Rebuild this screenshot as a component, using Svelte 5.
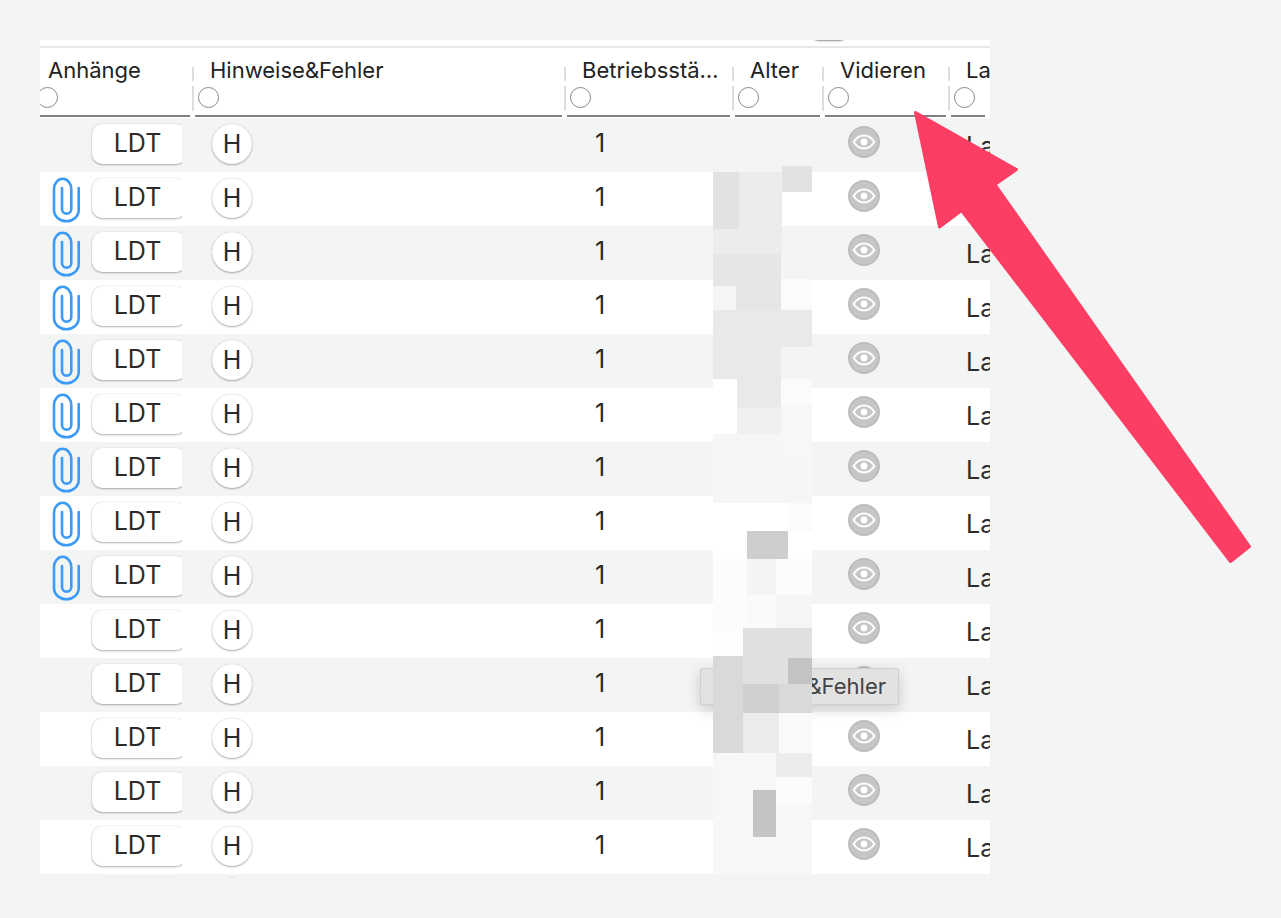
<script>
  const columns = [
    { label: 'Anhänge', width: 155 },
    { label: 'Hinweise&Fehler', width: 372 },
    { label: 'Betriebsstätte', width: 168 },
    { label: 'Alter', width: 90 },
    { label: 'Vidieren', width: 126 },
    { label: 'La', width: 39 }
  ];

  // rows 2-9 have attachments
  const rows = Array.from({ length: 14 }, (_, i) => ({ clip: i > 0 && i < 9 }));

  // pixelated redaction over the Alter column: x1, y1, x2, y2, colour
  const mosaic = [
    [782, 166, 812, 192, '#e2e2e2'], [713, 172, 739, 229, '#e2e2e2'], [739, 172, 782, 229, '#ececec'],
    [713, 229, 782, 254, '#ececec'], [782, 229, 812, 280, '#f3f5f4'], [713, 254, 781, 286, '#e5e7e6'],
    [713, 286, 736, 310, '#f5f5f5'], [736, 286, 781, 310, '#e5e7e6'], [781, 279, 812, 310, '#fbfbfb'],
    [713, 310, 812, 347, '#e8eaea'], [713, 347, 781, 379, '#e8eaea'], [781, 347, 812, 379, '#f3f5f4'],
    [713, 379, 737, 434, '#ffffff'], [737, 379, 781, 408, '#e8eaea'], [781, 379, 812, 404, '#fbfbfb'],
    [737, 408, 781, 434, '#eff0f0'], [781, 404, 812, 460, '#f6f8f7'], [713, 434, 781, 503, '#f5f7f6'],
    [781, 460, 812, 503, '#f5f7f6'], [713, 503, 812, 559, '#ffffff'], [788, 503, 812, 531, '#fbfbfb'],
    [747, 531, 788, 559, '#cecece'], [713, 559, 747, 628, '#fbfcfc'], [747, 559, 776, 595, '#f3f5f4'],
    [776, 559, 812, 595, '#fcfcfc'], [747, 595, 776, 628, '#fafafa'], [776, 595, 812, 628, '#f4f5f5'],
    [713, 628, 743, 656, '#fdfdfd'], [743, 628, 812, 658, '#e0e0e0'], [713, 656, 743, 753, '#d9d9d9'],
    [743, 658, 788, 684, '#e0e0e0'], [788, 658, 812, 684, '#c3c3c3'], [743, 684, 779, 713, '#d0d0d0'],
    [779, 684, 812, 713, '#d9d9d9'], [743, 713, 779, 753, '#ececec'], [779, 713, 812, 753, '#fafafa'],
    [713, 753, 776, 790, '#f6f8f8'], [776, 753, 812, 777, '#ececec'], [776, 777, 812, 805, '#fbfbfb'],
    [713, 790, 753, 837, '#f6f8f8'], [753, 790, 776, 837, '#c3c5c4'], [776, 805, 812, 874, '#f6f8f8'],
    [713, 837, 776, 874, '#f6f8f8']
  ];
</script>

{#snippet eye()}
  <span class="eye">
    <svg width="24" height="16" viewBox="0 0 24 16" aria-hidden="true">
      <path d="M1.6 8C4.4 3.8 8 1.6 12 1.6S19.6 3.8 22.4 8C19.6 12.2 16 14.4 12 14.4S4.4 12.2 1.6 8Z" fill="none" stroke="#fff" stroke-width="2" />
      <circle cx="12" cy="8" r="3.4" fill="#fff" />
    </svg>
  </span>
{/snippet}

<main class="page">
  <div class="table">
    <div class="peek-top"><span class="peek-dot"></span></div>

    <div class="head">
      {#each columns as col, i}
        <div class="th" style="width: {col.width}px">
          <span class="title">{col.label}</span>
          <span class="radio"></span>
          {#if i < columns.length - 1}<span class="grip"></span>{/if}
        </div>
      {/each}
    </div>

    {#each rows as row, i}
      <div class="row" class:odd={i % 2 === 0}>
        <div class="td attach" style="width: {columns[0].width}px">
          {#if row.clip}
            <svg class="clip" width="28" height="46" viewBox="0 0 28 46" aria-hidden="true">
              <path d="M26.7 11V33A12.35 11.3 0 0 1 2 33V12A8.65 10.2 0 0 1 19.3 12V32A4.65 4.65 0 0 1 10 32V11" fill="none" stroke="#3b9bf7" stroke-width="2.6" stroke-linecap="round" />
            </svg>
          {/if}
          <span class="ldt-wrap"><button class="ldt">LDT</button></span>
        </div>
        <div class="td" style="width: {columns[1].width}px">
          <button class="hint">H</button>
        </div>
        <div class="td num" style="width: {columns[2].width}px">1</div>
        <div class="td" style="width: {columns[3].width}px"></div>
        <div class="td validate" style="width: {columns[4].width}px">{@render eye()}</div>
        <div class="td lab" style="width: {columns[5].width}px">La</div>
      </div>
    {/each}

    <div class="peek-bottom">
      <span class="peek-ldt"></span>
      <span class="peek-h"></span>
    </div>
  </div>

  {#each mosaic as [x1, y1, x2, y2, c]}
    <div class="block" style="left: {x1}px; top: {y1}px; width: {x2 - x1}px; height: {y2 - y1}px; background: {c}"></div>
  {/each}

  <div class="tooltip">Hinweise&amp;Fehler</div>

  <svg class="arrow" width="1281" height="918" viewBox="0 0 1281 918" aria-hidden="true">
    <polygon points="915.5,112.5 1016.5,169.5 995,184.5 1249.5,546.5 1230.5,561.5 961.5,210.5 939.5,227" fill="#fd3e64" stroke="#fd3e64" stroke-width="3" stroke-linejoin="round" />
  </svg>
</main>

<style>
  :global(body) {
    margin: 0;
    background: #f3f5f4;
  }

  .page {
    position: relative;
    height: 918px;
    padding: 40px;
    box-sizing: border-box;
    overflow: hidden;
    font-family: Inter, "Liberation Sans", sans-serif;
    color: #2b2b2b;
  }

  .table {
    width: 950px;
  }

  .peek-top {
    height: 6px;
    background: #fff;
    overflow: hidden;
    padding-left: 773px;
    border-bottom: 2px solid #e8e8e8;
  }

  .peek-dot {
    display: block;
    width: 32px;
    height: 10px;
    margin-top: -10px;
    border-radius: 10px;
    box-shadow: 0 1px 2px rgba(0, 0, 0, 0.45);
  }

  .head {
    display: flex;
    height: 70px;
    background: #fff;
    overflow: hidden;
  }

  .th {
    position: relative;
    flex: none;
    box-sizing: border-box;
    height: 69px;
    padding-left: 15px;
    overflow: hidden;
  }

  .th:first-child {
    padding-left: 8px;
  }

  .th:last-child .title {
    margin-right: 0;
    overflow: visible;
    text-overflow: clip;
  }

  .th::after {
    content: '';
    position: absolute;
    left: 0;
    right: 5px;
    bottom: 0;
    height: 2px;
    background: #808080;
  }

  .title {
    display: block;
    height: 39px;
    line-height: 44px;
    font-size: 22px;
    color: #222;
    white-space: nowrap;
    overflow: hidden;
    text-overflow: ellipsis;
    margin-right: 15px;
  }

  .radio {
    display: block;
    width: 19px;
    height: 19px;
    margin-left: -12px;
    border: 1px solid #888;
    border-radius: 50%;
    background: #fff;
  }

  .th:first-child .radio {
    margin-left: -11px;
  }

  .grip {
    position: absolute;
    right: 1px;
    top: 19px;
    bottom: 6px;
    width: 2px;
    background: linear-gradient(#ddd 0 14px, transparent 14px 19px, #ddd 19px);
  }

  .row {
    display: flex;
    height: 54px;
    background: #fff;
    overflow: hidden;
  }

  .row.odd {
    background: #f3f5f4;
  }

  .td {
    flex: none;
    box-sizing: border-box;
    height: 54px;
    padding-top: 6px;
    overflow: hidden;
  }

  .attach {
    display: flex;
    position: relative;
    padding-left: 49px;
  }

  .clip {
    position: absolute;
    left: 12px;
    top: 5px;
  }

  .ldt-wrap {
    display: block;
    width: 93px;
    height: 44px;
    margin-top: -1px;
    padding: 1px 0 0 3px;
    box-sizing: border-box;
    overflow: hidden;
  }

  .ldt {
    display: block;
    width: 94px;
    height: 40px;
    margin: 0;
    padding: 0 3px 2px 0;
    border: none;
    border-radius: 10px;
    background: #fff;
    box-shadow: 0 1px 2px rgba(0, 0, 0, 0.3), 0 0 1px rgba(0, 0, 0, 0.25);
    font: inherit;
    font-size: 25px;
    color: #2b2b2b;
  }

  .hint {
    display: block;
    width: 40px;
    height: 40px;
    margin-left: 17px;
    padding: 0;
    border: none;
    border-radius: 50%;
    background: #fff;
    box-shadow: 0 1px 2px rgba(0, 0, 0, 0.3), 0 0 1px rgba(0, 0, 0, 0.25);
    font: inherit;
    font-size: 25px;
    color: #2b2b2b;
  }

  .num {
    padding: 8px 0 0 28px;
    line-height: 34px;
    font-size: 25px;
  }

  .validate {
    padding: 8px 0 0 23px;
  }

  .eye {
    display: flex;
    align-items: center;
    justify-content: center;
    width: 32px;
    height: 32px;
    box-sizing: border-box;
    border: 2px solid #bdbdbd;
    border-radius: 50%;
    background: #c6c6c6;
  }

  .lab {
    padding: 11px 0 0 15px;
    line-height: 34px;
    font-size: 25px;
  }

  .peek-bottom {
    display: flex;
    height: 4px;
    overflow: hidden;
    padding-left: 58px;
  }

  .peek-ldt,
  .peek-h {
    display: block;
    margin-top: 4px;
    height: 40px;
    box-shadow: 0 0 2px rgba(0, 0, 0, 0.12);
    border-radius: 10px;
    width: 82px;
  }

  .peek-h {
    width: 19px;
    margin-left: 43px;
    box-shadow: 0 0 2px rgba(0, 0, 0, 0.3);
  }

  .block {
    position: absolute;
    z-index: 2;
  }

  .tooltip {
    position: absolute;
    left: 700px;
    top: 668px;
    width: 199px;
    height: 37px;
    box-sizing: border-box;
    padding-right: 12px;
    border: 1px solid #cfcfcf;
    border-radius: 2px;
    background: #e2e2e1;
    box-shadow: 0 4px 14px rgba(0, 0, 0, 0.18);
    font-size: 22px;
    line-height: 35px;
    text-align: right;
    color: #444;
    z-index: 1;
  }

  .arrow {
    position: absolute;
    left: 0;
    top: 0;
    z-index: 3;
    pointer-events: none;
  }
</style>
